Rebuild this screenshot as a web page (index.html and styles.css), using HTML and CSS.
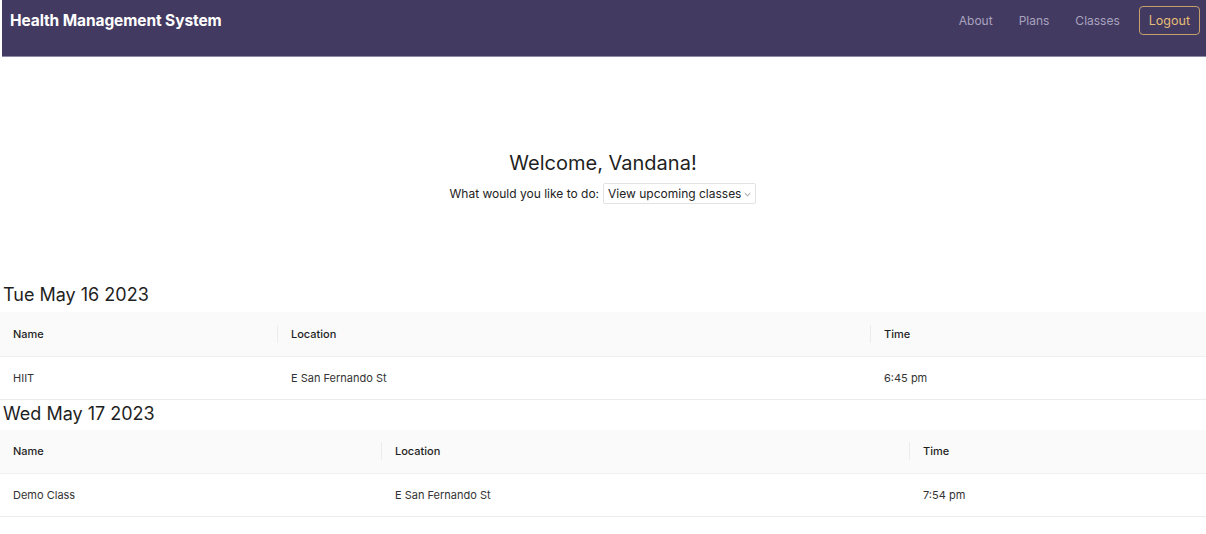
FILE: index.html
```html
<!DOCTYPE html>
<html>
<head>
<meta charset="utf-8">
<link rel="stylesheet" href="styles.css">
</head>
<body>
<nav class="navbar">
  <div class="brand">Health Management System</div>
  <div class="nav-links">
    <a class="nav-link">About</a>
    <a class="nav-link">Plans</a>
    <a class="nav-link">Classes</a>
    <button class="logout">Logout</button>
  </div>
</nav>
<main>
  <section class="welcome">
    <h1 class="welcome-title">Welcome, Vandana!</h1>
    <div class="action-row">
      <span>What would you like to do:</span>
      <span class="select">View upcoming classes <svg class="chev" width="7" height="5" viewBox="0 0 7 5"><path d="M0.8 1.2 L3.5 3.8 L6.2 1.2" fill="none" stroke="#777" stroke-width="0.9"/></svg></span>
    </div>
  </section>
  <section class="day">
    <h2 class="day-title">Tue May 16 2023</h2>
    <table class="tbl t1">
      <colgroup><col class="c1"><col class="c2"><col class="c3"></colgroup>
      <thead><tr><th>Name</th><th>Location</th><th>Time</th></tr></thead>
      <tbody><tr><td>HIIT</td><td>E San Fernando St</td><td>6:45 pm</td></tr></tbody>
    </table>
  </section>
  <section class="day">
    <h2 class="day-title">Wed May 17 2023</h2>
    <table class="tbl t2">
      <colgroup><col class="c1"><col class="c2"><col class="c3"></colgroup>
      <thead><tr><th>Name</th><th>Location</th><th>Time</th></tr></thead>
      <tbody><tr><td>Demo Class</td><td>E San Fernando St</td><td>7:54 pm</td></tr></tbody>
    </table>
  </section>
</main>
</body>
</html>
```
FILE: styles.css
```css
* { box-sizing: border-box; }
body {
  margin: 0;
  font-family: Inter, "Noto Sans", "Liberation Sans", sans-serif;
  color: #222;
  background: #fff;
}
.navbar {
  margin-left: 2px;
  height: 57px;
  background: #433a62;
  border-bottom: 1px solid #8f89a8;
  display: flex;
  justify-content: space-between;
  align-items: flex-start;
  padding: 6px 6px 0 8px;
}
.brand {
  color: #fff;
  font-weight: 700;
  font-size: 15.5px;
  line-height: 29px;
  letter-spacing: -0.1px;
}
.nav-links {
  display: flex;
  align-items: center;
  height: 29px;
}
.nav-link {
  color: #a8a3bf;
  font-size: 12px;
  margin-right: 26px;
}
.nav-link:nth-child(3) { margin-right: 19px; }
.logout {
  font-family: inherit;
  background: transparent;
  color: #e5bd76;
  border: 1px solid #c5a06a;
  border-radius: 4px;
  font-size: 12.5px;
  height: 29px;
  padding: 0 9px;
}
.welcome {
  text-align: center;
  padding-top: 94px;
  height: 226px;
}
.welcome-title {
  margin: 0;
  font-size: 20px;
  font-weight: 400;
  line-height: 24px;
  color: #1f1f1f;
}
.action-row {
  margin-top: 8px;
  font-size: 12px;
  display: flex;
  justify-content: center;
  align-items: center;
  gap: 4px;
  color: #222;
}
.select {
  border: 1px solid #e3e3e3;
  border-radius: 2px;
  padding: 2px 4px;
  display: inline-flex;
  align-items: center;
  gap: 3px;
}
.chev { margin-top: 1px; }
.day-title {
  margin: 0;
  font-size: 18px;
  font-weight: 400;
  line-height: 24px;
  padding-left: 3px;
  color: #1f1f1f;
}
.day + .day .day-title { margin-top: 2px; }
.tbl {
  width: 1206px;
  border-collapse: collapse;
  table-layout: fixed;
  margin-top: 5px;
  font-size: 11px;
}
.day + .day .tbl { margin-top: 4px; }
.t1 .c1 { width: 278px; }
.t1 .c2 { width: 593px; }
.t1 .c3 { width: 335px; }
.t2 .c1 { width: 382px; }
.t2 .c2 { width: 528px; }
.t2 .c3 { width: 296px; }
.tbl th {
  background: #fafafa;
  font-weight: 500;
  color: #1f1f1f;
  text-align: left;
  height: 44px;
  padding: 0 13px;
  border-bottom: 1px solid #f0f0f0;
  position: relative;
}
.tbl th + th::before {
  content: "";
  position: absolute;
  left: -1px;
  top: 50%;
  width: 1px;
  height: 18px;
  transform: translateY(-50%);
  background: #ececec;
}
.tbl td {
  height: 43px;
  padding: 0 13px;
  color: #333;
  border-bottom: 1px solid #ececec;
}
```
